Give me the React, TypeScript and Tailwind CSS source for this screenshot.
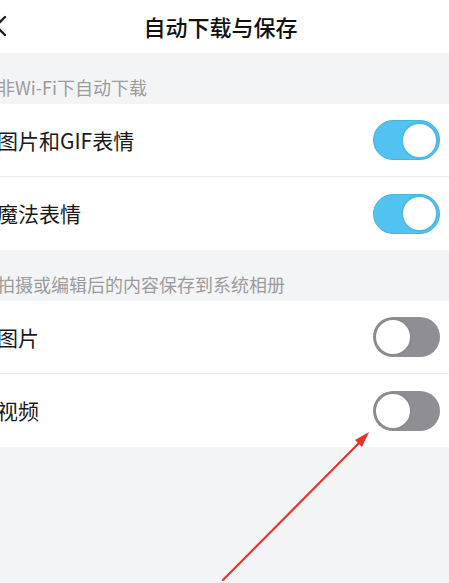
import React from "react";

const font = { fontFamily: '"Noto Sans CJK SC", "Noto Sans", sans-serif' };

function Toggle({ on }: { on: boolean }) {
  return on ? (
    <div className="h-[40px] w-[67px] rounded-full bg-[#52c3f0] border border-[#46b3de] flex items-center justify-end pr-[1px]">
      <div className="h-[37px] w-[37px] rounded-full bg-white border-2 border-[#4fb9e3]" />
    </div>
  ) : (
    <div className="h-[40px] w-[67px] rounded-full bg-[#8e8e93] flex items-center justify-start pl-[1px]">
      <div className="h-[38px] w-[38px] rounded-full bg-white border-2 border-[#8a8a8f]" />
    </div>
  );
}

function SectionTitle({ text }: { text: string }) {
  return (
    <div className="h-[51px] bg-[#f3f4f6] flex items-end pb-[8px]">
      <span className="-ml-[3px] text-[18px] text-[#9b9b9b] leading-none">{text}</span>
    </div>
  );
}

function Row({ label, on, last }: { label: string; on: boolean; last?: boolean }) {
  return (
    <div className={"h-[73px] bg-white flex items-center justify-between pr-[9px] " + (last ? "" : "border-b border-[#ececec]")}>
      <span className="-ml-[3px] text-[21px] text-[#1a1a1a] leading-none">{label}</span>
      <Toggle on={on} />
    </div>
  );
}

export default function App() {
  return (
    <div className="relative w-[449px] h-[583px] bg-[#f3f4f6] overflow-hidden" style={font}>
      {/* Top bar */}
      <div className="h-[53px] bg-white flex items-center justify-center relative">
        <svg className="absolute left-[-6px] top-[15px]" width="14" height="22" viewBox="0 0 14 22">
          <path d="M11 2 L2 11 L11 20" fill="none" stroke="#222" strokeWidth="2.4" strokeLinecap="round" strokeLinejoin="round" />
        </svg>
        <span className="text-[22px] text-[#111] font-medium ml-[-8px]">自动下载与保存</span>
      </div>

      <SectionTitle text="非Wi-Fi下自动下载" />
      <Row label="图片和GIF表情" on />
      <Row label="魔法表情" on last />

      <SectionTitle text="拍摄或编辑后的内容保存到系统相册" />
      <Row label="图片" on={false} />
      <Row label="视频" on={false} last />

      {/* annotation arrow */}
      <svg className="absolute left-0 top-0 pointer-events-none" width="449" height="583" viewBox="0 0 449 583">
        <path d="M223 580 L362 440" stroke="#e8322b" strokeWidth="2.2" strokeLinecap="round" />
        <path d="M369 432 L355 440 L362 447 Z" fill="#e8322b" />
      </svg>
    </div>
  );
}
